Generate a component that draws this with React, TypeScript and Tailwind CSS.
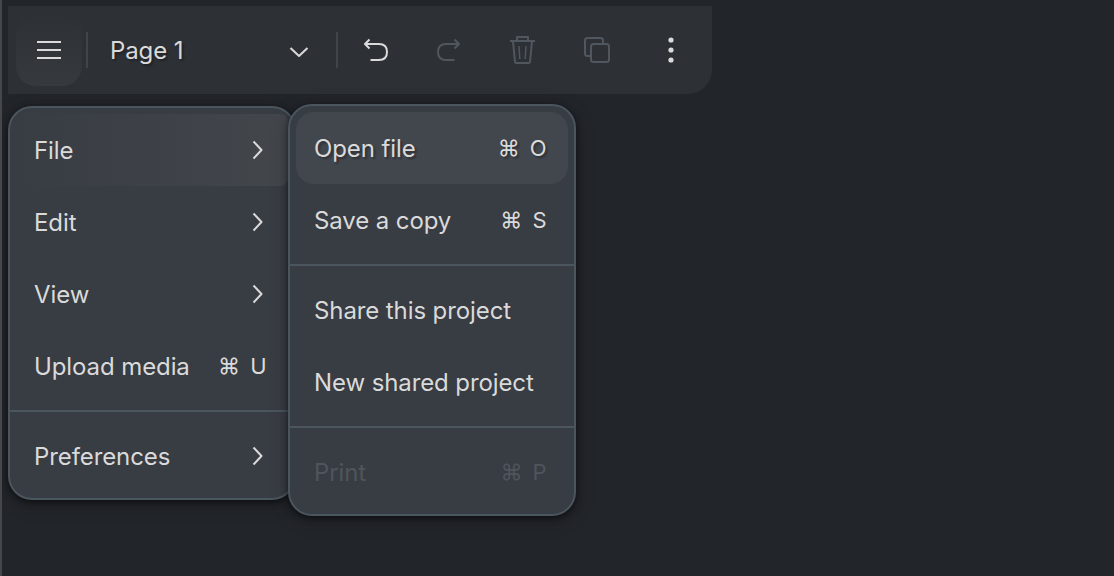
import type { ReactNode } from 'react';

function Chevron() {
  return (
    <svg width="12" height="20" viewBox="0 0 12 20" fill="none" stroke="currentColor" strokeWidth="2" strokeLinejoin="round" className="mr-[3px] shrink-0">
      <path d="M1.5 1.5 L9.5 10 L1.5 18.5" />
    </svg>
  );
}

function Shortcut({ letter }: { letter: string }) {
  return (
    <span className="flex gap-[10px] text-[22px] leading-none">
      <span>⌘</span>
      <span>{letter}</span>
    </span>
  );
}

type ItemProps = { label: string; shortcut?: string; submenu?: boolean; className?: string };

function Item({ label, shortcut, submenu, className = 'rounded-[18px]' }: ItemProps) {
  return (
    <button className={`flex h-[72px] w-full items-center justify-between pr-[21.5px] pl-[18px] text-left whitespace-nowrap ${className}`}>
      <span className="pt-[2px] tracking-[-0.1px]">{label}</span>
      {shortcut && <Shortcut letter={shortcut} />}
      {submenu && <Chevron />}
    </button>
  );
}

function Group({ children }: { children: ReactNode }) {
  return <div className="px-[6px] py-2 first:pt-[6px] last:pb-[6px]">{children}</div>;
}

const menuClass =
  'absolute w-[288px] divide-y-2 divide-[#4a555d] rounded-[24px] border-2 border-[#4a555d] bg-[#383c43] shadow-[0_2px_6px_rgba(0,0,0,0.5),0_4px_18px_rgba(0,0,0,0.25)]';

function Divider() {
  return <div className="h-9 w-[2px] bg-[#414448]" />;
}

function Toolbar() {
  return (
    <header className="flex h-[88px] w-[704px] items-center rounded-br-[24px] bg-[#2d3035]">
      <button className="ml-2 flex h-[72px] w-[66px] items-center justify-center rounded-[20px] bg-linear-to-b from-[#2d3035] to-[#36393e]">
        <svg width="24" height="20" viewBox="0 0 24 20" stroke="currentColor" strokeWidth="2">
          <path d="M0 2H24M0 10H24M0 18H24" />
        </svg>
      </button>
      <div className="ml-1"><Divider /></div>
      <button className="flex w-[248px] items-center justify-between pr-[27px] pl-[22px]">
        <span className="pt-[2px] tracking-[-0.1px] [text-shadow:2px_2px_2px_rgba(0,0,0,0.3)]">Page 1</span>
        <svg width="20" height="12" viewBox="0 0 20 12" fill="none" stroke="currentColor" strokeWidth="2" strokeLinejoin="round" className="mt-[3px]">
          <path d="M1.5 2L10 10L18.5 2" />
        </svg>
      </button>
      <Divider />
      <button className="ml-[24px]">
        <svg width="28" height="28" viewBox="0 0 28 28" fill="none" stroke="currentColor" strokeWidth="2" strokeLinejoin="round">
          <path d="M7.5 3.5L3 8L7.5 12.5M3 8H17C22 8 25 11 25 16C25 21 22 24 17 24H8.5" />
        </svg>
      </button>
      <button className="ml-[46px] text-[#50575f]">
        <svg width="28" height="28" viewBox="0 0 28 28" fill="none" stroke="currentColor" strokeWidth="2" strokeLinejoin="round">
          <path d="M18.5 3.5L23 8L18.5 12.5M23 8H10C5 8 2 11 2 16C2 21 5 24 10 24H18.5" />
        </svg>
      </button>
      <button className="ml-[46px] text-[#50575f]">
        <svg width="28" height="30" viewBox="0 0 28 30" fill="none" stroke="currentColor" strokeWidth="2" strokeLinejoin="round">
          <path d="M0 6H25M7 6V2H18V6M3 6L5 27Q5.1 28 6.2 28H18.8Q19.9 28 20 27L22 6" />
          <path d="M9 11L9.8 24M16 11L15.2 24" strokeWidth="1.5" />
        </svg>
      </button>
      <button className="ml-[45px] text-[#50575f]">
        <svg width="28" height="28" viewBox="0 0 28 28" fill="none" stroke="currentColor" strokeWidth="2">
          <rect x="8" y="8" width="18" height="18" rx="2.5" />
          <path d="M8 20H4.5Q2 20 2 17.5V4.5Q2 2 4.5 2H17.5Q20 2 20 4.5V8" />
        </svg>
      </button>
      <button className="ml-[56px]">
        <svg width="8" height="28" viewBox="0 0 8 28" fill="currentColor">
          <circle cx="4" cy="4" r="2.6" />
          <circle cx="4" cy="14" r="2.6" />
          <circle cx="4" cy="24" r="2.6" />
        </svg>
      </button>
    </header>
  );
}

export default function App() {
  return (
    <main className="relative h-[576px] w-[1114px] overflow-hidden border-l-2 border-[#45474a] bg-[#22252a] pt-[6px] pl-[6px] font-['Inter',sans-serif] text-[24px] leading-[36px] font-[425] text-[#dadada]">
      <Toolbar />
      <nav className={`${menuClass} top-[106px] left-[6px]`}>
        <Group>
          <Item label="File" submenu className="rounded-[8px] bg-linear-to-r from-[#383c43] to-[#43474c]" />
          <Item label="Edit" submenu />
          <Item label="View" submenu />
          <Item label="Upload media" shortcut="U" />
        </Group>
        <Group>
          <Item label="Preferences" submenu />
        </Group>
      </nav>
      <nav className={`${menuClass} top-[104px] left-[286px]`}>
        <Group>
          <Item label="Open file" shortcut="O" className="rounded-[18px] bg-[#42464d] [text-shadow:2px_2px_2px_rgba(0,0,0,0.3)]" />
          <Item label="Save a copy" shortcut="S" />
        </Group>
        <Group>
          <Item label="Share this project" />
          <Item label="New shared project" />
        </Group>
        <Group>
          <Item label="Print" shortcut="P" className="font-normal text-[#50545b]" />
        </Group>
      </nav>
    </main>
  );
}
